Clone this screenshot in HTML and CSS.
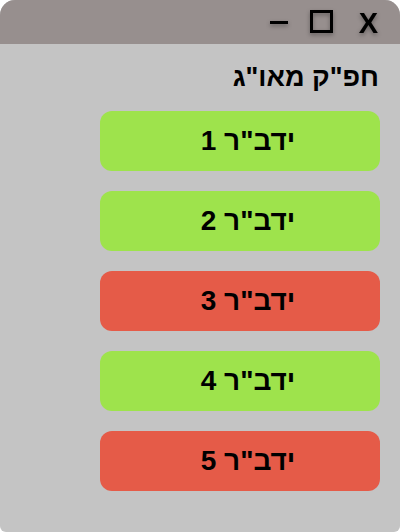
FILE: index.html
```html
<!DOCTYPE html>
<html lang="he">
<head>
<meta charset="utf-8">
<link rel="stylesheet" href="styles.css">
</head>
<body>
<div class="window">
  <div class="titlebar">
    <span class="ctl ctl-min" aria-label="minimize"></span>
    <span class="ctl ctl-max" aria-label="maximize"></span>
    <span class="ctl ctl-close">X</span>
  </div>
  <div class="content" dir="rtl">
    <div class="title">חפ"ק מאו"ג</div>
    <div class="list">
      <button class="item ok">ידב"ר 1</button>
      <button class="item ok">ידב"ר 2</button>
      <button class="item bad">ידב"ר 3</button>
      <button class="item ok">ידב"ר 4</button>
      <button class="item bad">ידב"ר 5</button>
    </div>
  </div>
</div>
</body>
</html>
```
FILE: styles.css
```css
html, body {
  margin: 0;
  padding: 0;
  background: #ffffff;
}
body {
  font-family: "Liberation Sans", Arial, sans-serif;
}
.window {
  width: 400px;
  height: 532px;
  background: #c4c4c4;
  border-radius: 15px 15px 6px 6px;
  overflow: hidden;
  display: flex;
  flex-direction: column;
}
.titlebar {
  height: 44px;
  background: #978f8e;
  display: flex;
  align-items: center;
  justify-content: flex-end;
  padding-right: 22px;
  box-sizing: border-box;
}
.ctl {
  display: block;
  filter: drop-shadow(0 2px 2px rgba(0,0,0,0.35));
}
.ctl-min {
  width: 18px;
  height: 3px;
  background: #000;
  margin-right: 22px;
}
.ctl-max {
  width: 23px;
  height: 23px;
  box-sizing: border-box;
  border: 3px solid #000;
  margin-right: 26px;
  margin-top: -2px;
}
.ctl-close {
  font-weight: bold;
  font-size: 29px;
  line-height: 22px;
  color: #000;
  margin-top: 2px;
}
.content {
  padding: 18px 20px 0 20px;
}
.title {
  font-weight: bold;
  font-size: 27px;
  line-height: 30px;
  color: #000;
  margin-bottom: 19px;
  padding-right: 1px;
}
.list {
  display: flex;
  flex-direction: column;
  gap: 20px;
  align-items: flex-start;
}
.item {
  width: 280px;
  height: 60px;
  border: none;
  border-radius: 12px;
  font-family: "Liberation Sans", Arial, sans-serif;
  font-weight: bold;
  font-size: 28px;
  color: #000;
  padding: 0 0 0 16px;
}
.ok {
  background: #9ee34c;
}
.bad {
  background: #e55b48;
}
```
